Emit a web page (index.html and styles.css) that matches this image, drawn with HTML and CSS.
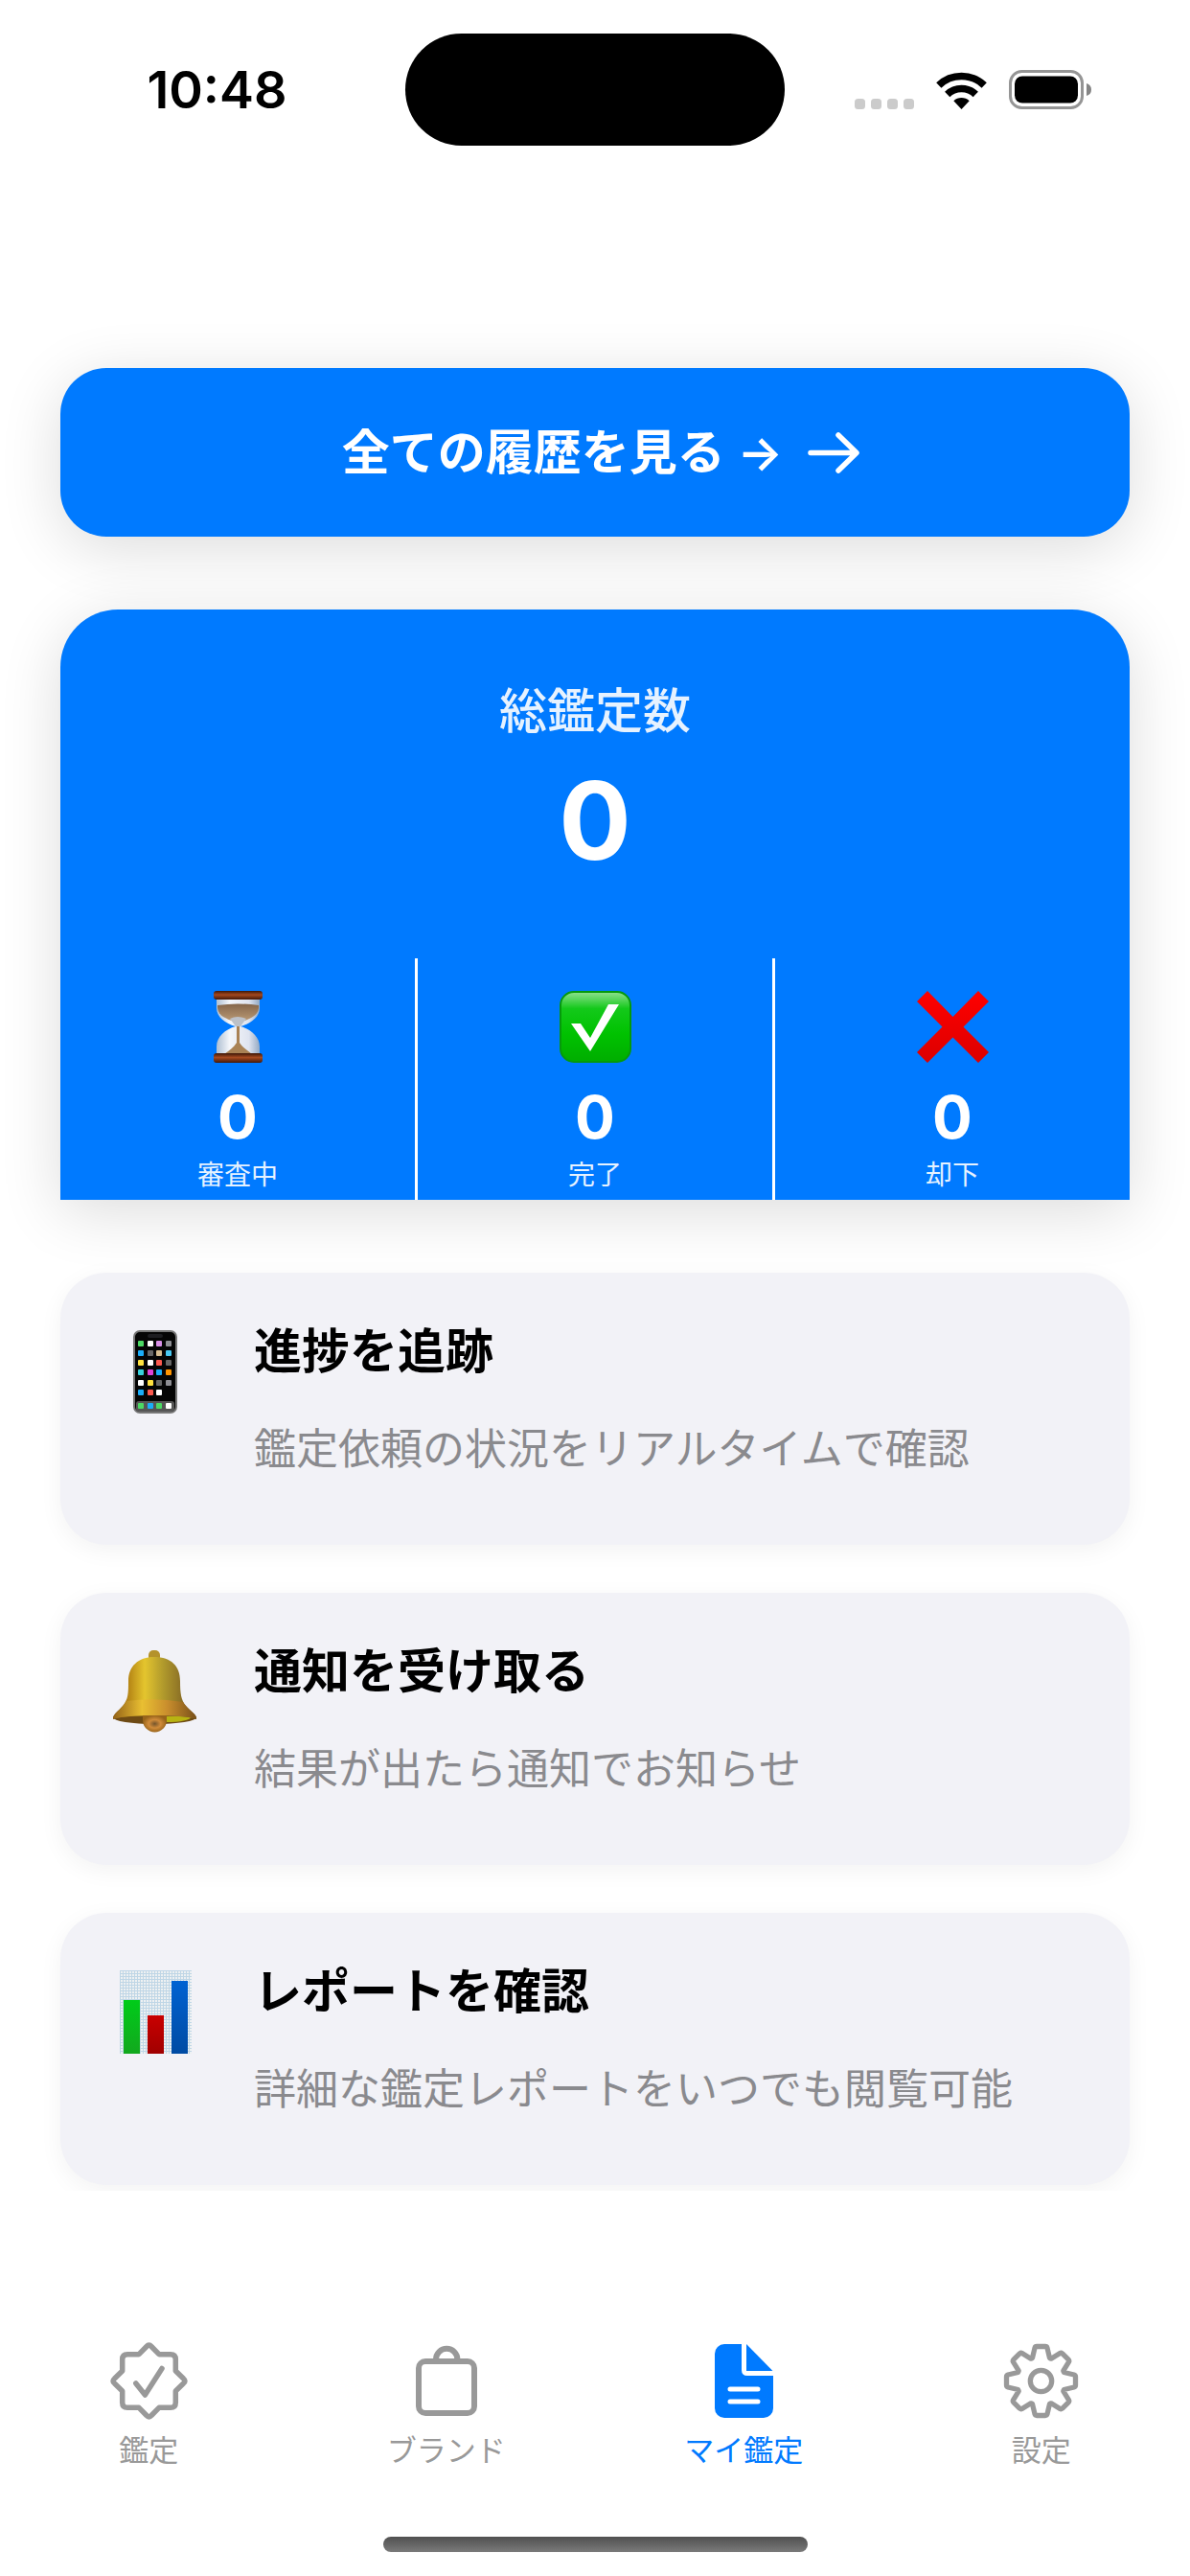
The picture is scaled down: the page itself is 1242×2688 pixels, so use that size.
FILE: index.html
```html
<!DOCTYPE html>
<html lang="ja">

<head>
  <meta charset="UTF-8">
  <meta name="viewport" content="width=device-width, initial-scale=1.0">
  <title>マイ鑑定</title>
  <link rel="stylesheet" href="styles.css">
</head>

<body>
  <header class="status-bar">
    <div class="status-left"><span class="time">10:48</span></div>
    <div class="island"></div>
    <div class="status-right">
      <svg class="signal" width="62" height="11" viewBox="0 0 62 11" fill="#cbcbcb">
        <rect width="11" height="11" rx="3.5" />
        <rect x="17" width="11" height="11" rx="3.5" />
        <rect x="34" width="11" height="11" rx="3.5" />
        <rect x="51" width="11" height="11" rx="3.5" />
      </svg>
      <svg width="53" height="39" viewBox="0 0 53 39">
        <g fill="none" stroke="#000" stroke-width="7.6">
          <path d="M2.8 13.9a34.5 34.5 0 0 1 47.4 0" />
          <path d="M11.7 23.4a21.5 21.5 0 0 1 29.6 0" />
        </g>
        <path d="M26.5 39l-8.2-8.7a12 12 0 0 1 16.4 0z" />
      </svg>
      <svg width="86" height="41" viewBox="0 0 86 41">
        <rect x="1.5" y="1.5" width="75" height="38" rx="12" fill="none" stroke="#959595" stroke-width="3" />
        <rect x="6" y="6.5" width="66" height="28" rx="8" />
        <path d="M81 14q5 1.500 5 6.500t-5 6.500z" fill="#858585" />
      </svg>
    </div>
  </header>

  <main class="content">
    <button class="history-button" type="button">
      <span>全ての履歴を見る →</span>
      <svg width="54" height="43" viewBox="0 0 54 43" fill="none" stroke="#fff" stroke-width="5.5" stroke-linecap="round" stroke-linejoin="round">
        <path d="M3 21.500H50M32 3l19 18.500L32 40" />
      </svg>
    </button>

    <section class="summary">
      <h1 class="summary-title">総鑑定数</h1>
      <p class="summary-total">0</p>
      <div class="stats">
        <div class="stat">
          <svg class="stat-icon" width="51" height="75" viewBox="0 0 51 75">
            <defs>
              <linearGradient id="wood" x2="0" y2="1">
                <stop offset="0" stop-color="#3d1708" />
                <stop offset=".45" stop-color="#a5491f" />
                <stop offset="1" stop-color="#42190a" />
              </linearGradient>
              <linearGradient id="glass">
                <stop offset="0" stop-color="#aebfd2" />
                <stop offset=".3" stop-color="#f4f6fa" />
                <stop offset=".75" stop-color="#dfe4f0" />
                <stop offset="1" stop-color="#93a9c4" />
              </linearGradient>
              <linearGradient id="sand" x2="0" y2="1">
                <stop offset="0" stop-color="#85664b" />
                <stop offset="1" stop-color="#bb9b76" />
              </linearGradient>
            </defs>
            <path d="M3 8h45v10c0 9-9 16-20 19 11 3 20 11 20 21v8H3v-8c0-10 9-18 20-21C12 34 3 27 3 18z" fill="url(#glass)" />
            <path d="M4 15q21-3 43 0v3c-1 8-9 11-17 14h-9C13 29 5 26 4 18z" fill="url(#sand)" />
            <path d="M17 29q8-4 17 0l-6 8h-5z" fill="#bdc1c8" />
            <path d="M24 37h3v17c3 5 8 8 13 12H11c5-4 10-7 13-12z" fill="#a98255" />
            <rect width="51" height="9" rx="3" fill="url(#wood)" />
            <rect y="65" width="51" height="10" rx="3" fill="url(#wood)" />
          </svg>
          <p class="stat-value">0</p>
          <p class="stat-label">審査中</p>
        </div>
        <div class="stat">
          <svg class="stat-icon" width="75" height="75" viewBox="0 0 75 75">
            <defs>
              <linearGradient id="green" x2="0" y2="1">
                <stop offset="0" stop-color="#8fe08f" />
                <stop offset=".24" stop-color="#13c91a" />
                <stop offset=".6" stop-color="#00c200" />
                <stop offset="1" stop-color="#00ad00" />
              </linearGradient>
            </defs>
            <rect x="1" y="1" width="73" height="73" rx="14" fill="url(#green)" stroke="#069a0b" stroke-width="2" />
            <path d="M12 34h10l10 15 19-35h11L32 63z" fill="#fff" />
          </svg>
          <p class="stat-value">0</p>
          <p class="stat-label">完了</p>
        </div>
        <div class="stat">
          <svg class="stat-icon" width="75" height="75" viewBox="0 0 75 75">
            <defs>
              <linearGradient id="red" x2="0" y2="1">
                <stop offset="0" stop-color="#ff0000" />
                <stop offset="1" stop-color="#dc0000" />
              </linearGradient>
            </defs>
            <path d="M11 0l26.500 27L64 0l11 11-26.500 26.500L75 64 64 75 37.500 48.500 11 75 0 64l26.500-26.500L0 11z" fill="url(#red)" />
          </svg>
          <p class="stat-value">0</p>
          <p class="stat-label">却下</p>
        </div>
      </div>
    </section>

    <section class="features">
      <article class="feature">
        <div class="feature-icon">
          <svg width="46" height="87" viewBox="0 0 46 87">
            <rect x="1" y="1" width="44" height="85" rx="6" fill="#050505" stroke="#777" stroke-width="2" />
            <rect x="15" y="4" width="16" height="4" rx="2" fill="#1d1d20" />
            <rect x="3" y="74" width="40" height="11" rx="3" fill="#555" />
            <!-- app grid, one group per row -->
            <g><rect x="5" y="11" width="6" height="6" rx="1" fill="#4cd964" /><rect x="15" y="11" width="6" height="6" rx="1" fill="#fff" /><rect x="24" y="11" width="6" height="6" rx="1" fill="#d990e8" /><rect x="34" y="11" width="6" height="6" rx="1" fill="#8e8e93" /></g>
            <g><rect x="5" y="21" width="6" height="6" rx="1" fill="#1badf8" /><rect x="15" y="21" width="6" height="6" rx="1" fill="#666" /><rect x="24" y="21" width="6" height="6" rx="1" fill="#d6bd91" /><rect x="34" y="21" width="6" height="6" rx="1" fill="#49c9f2" /></g>
            <g><rect x="5" y="31" width="6" height="6" rx="1" fill="#ffe13f" /><rect x="15" y="31" width="6" height="6" rx="1" fill="#fff" /><rect x="24" y="31" width="6" height="6" rx="1" fill="#fb594e" /><rect x="34" y="31" width="6" height="6" rx="1" fill="#666" /></g>
            <g><rect x="5" y="41" width="6" height="6" rx="1" fill="#38d1dc" /><rect x="15" y="41" width="6" height="6" rx="1" fill="#df43d8" /><rect x="24" y="41" width="6" height="6" rx="1" fill="#1badf8" /><rect x="34" y="41" width="6" height="6" rx="1" fill="#ff9500" /></g>
            <g><rect x="5" y="52" width="6" height="6" rx="1" fill="#fff" /><rect x="15" y="52" width="6" height="6" rx="1" fill="#ffe13f" /><rect x="24" y="52" width="6" height="6" rx="1" fill="#666" /><rect x="34" y="52" width="6" height="6" rx="1" fill="#8e8e93" /></g>
            <g><rect x="5" y="62" width="6" height="6" rx="1" fill="#1badf8" /><rect x="15" y="62" width="6" height="6" rx="1" fill="#fb594e" /><rect x="24" y="62" width="6" height="6" rx="1" fill="#fff" /></g>
            <g><rect x="5" y="76" width="6" height="6" rx="1" fill="#4cd964" /><rect x="15" y="76" width="6" height="6" rx="1" fill="#1badf8" /><rect x="24" y="76" width="6" height="6" rx="1" fill="#4cd964" /><rect x="34" y="76" width="6" height="6" rx="1" fill="#fff" /></g>
          </svg>
        </div>
        <div class="feature-text">
          <h2>進捗を追跡</h2>
          <p>鑑定依頼の状況をリアルタイムで確認</p>
        </div>
      </article>

      <article class="feature">
        <div class="feature-icon">
          <svg width="88" height="86" viewBox="0 0 88 86">
            <defs>
              <linearGradient id="gold">
                <stop offset="0" stop-color="#85591a" />
                <stop offset=".2" stop-color="#b98a17" />
                <stop offset=".38" stop-color="#e4c52e" />
                <stop offset=".6" stop-color="#b19a2c" />
                <stop offset=".8" stop-color="#8f7426" />
                <stop offset="1" stop-color="#694a18" />
              </linearGradient>
              <linearGradient id="rim">
                <stop offset="0" stop-color="#946217" />
                <stop offset=".35" stop-color="#e9bf32" />
                <stop offset=".65" stop-color="#c98e2d" />
                <stop offset="1" stop-color="#795019" />
              </linearGradient>
              <radialGradient id="clapper">
                <stop offset="0" stop-color="#75552c" />
                <stop offset=".5" stop-color="#d08b3a" />
                <stop offset="1" stop-color="#98641a" />
              </radialGradient>
            </defs>
            <rect x="37" width="12" height="12" rx="5" fill="#b4922b" />
            <ellipse cx="43.500" cy="70" rx="43.500" ry="7" fill="#6e4a14" />
            <path d="M55 69h28q-5 6-27 6z" fill="#b8b312" />
            <path d="M43 7c18 0 27 10 27 25 0 13 1 20 6 26 6 7 11 8 11 14-10-3-24-4-43.500-4S10 69 0 72c0-6 5-8 10-14 6-7 6-13 6-26C16 17 26 7 43 7z" fill="url(#gold)" />
            <path d="M14 53q29-4 59 1 4 6 9 10 5 4 5 8-10-4-43.500-4T0 72q0-4 5-8 5-4 9-11z" fill="url(#rim)" />
            <path d="M31 68h25v5a12.500 12.500 0 0 1-25 0z" fill="url(#clapper)" />
          </svg>
        </div>
        <div class="feature-text">
          <h2>通知を受け取る</h2>
          <p>結果が出たら通知でお知らせ</p>
        </div>
      </article>

      <article class="feature">
        <div class="feature-icon">
          <svg width="75" height="87" viewBox="0 0 75 87">
            <defs>
              <pattern id="grid" width="3" height="3" patternUnits="userSpaceOnUse">
                <rect width="3" height="3" fill="#eef1f2" />
                <path d="M0 .5h3M.5 0v3" stroke="#bfd6e6" />
              </pattern>
              <linearGradient id="bar-green" x2="0" y2="1">
                <stop offset="0" stop-color="#00cc1a" />
                <stop offset="1" stop-color="#12a81e" />
              </linearGradient>
              <linearGradient id="bar-red" x2="0" y2="1">
                <stop offset="0" stop-color="#c90000" />
                <stop offset="1" stop-color="#a00000" />
              </linearGradient>
              <linearGradient id="bar-blue" x2="0" y2="1">
                <stop offset="0" stop-color="#0062d2" />
                <stop offset="1" stop-color="#004ba3" />
              </linearGradient>
            </defs>
            <rect width="75" height="87" fill="url(#grid)" />
            <rect x="4" y="31" width="17" height="56" fill="url(#bar-green)" />
            <rect x="29" y="47" width="17" height="40" fill="url(#bar-red)" />
            <rect x="54" y="11" width="17" height="76" fill="url(#bar-blue)" />
          </svg>
        </div>
        <div class="feature-text">
          <h2>レポートを確認</h2>
          <p>詳細な鑑定レポートをいつでも閲覧可能</p>
        </div>
      </article>
    </section>
  </main>

  <footer class="bottom">
    <nav class="tab-bar">
      <a class="tab" href="#appraisal">
        <svg width="81" height="81" viewBox="0 0 81 81" fill="none" stroke="currentColor" stroke-width="5.5" stroke-linejoin="round" stroke-linecap="round">
          <path d="M30 12.700L38 4.500Q40.500 1.500 43 4.500L51 12.700H63Q68.300 12.700 68.300 18V30L76.500 38Q79.500 40.500 76.500 43L68.300 51V63Q68.300 68.300 63 68.300H51L43 76.500Q40.500 79.500 38 76.500L30 68.300H18Q12.700 68.300 12.700 63V51L4.500 43Q1.500 40.500 4.500 38L12.700 30V18Q12.700 12.700 18 12.700Z" />
          <path d="M26.800 43L36.400 55 54 27.500" />
        </svg>
        <span>鑑定</span>
      </a>
      <a class="tab" href="#brands">
        <svg width="64" height="81" viewBox="0 -4 64 81" fill="none" stroke="currentColor" stroke-width="6">
          <rect x="3" y="16" width="58" height="54" rx="7" />
          <path d="M21 15v-1a11.200 11.200 0 0 1 22.400 0v1" />
        </svg>
        <span>ブランド</span>
      </a>
      <a class="tab active" href="#mine" aria-current="page">
        <svg width="61" height="81" viewBox="0 -2 61 81" fill="currentColor">
          <path d="M10 0H28V27q0 6 6 6H61V67a10 10 0 0 1-10 10H10A10 10 0 0 1 0 67V10A10 10 0 0 1 10 0Z" />
          <path d="M33 0L60.500 28H33Z" />
          <path d="M16 47H45M16 60H45" stroke="#fff" stroke-width="5" stroke-linecap="round" />
        </svg>
        <span>マイ鑑定</span>
      </a>
      <a class="tab" href="#settings">
        <svg width="81" height="81" viewBox="-40.500 -40.500 81 81" fill="none" stroke="currentColor" stroke-width="5.3" stroke-linejoin="round">
          <path d="M-9-24L-6.500-34.500Q-6-36-4.500-36H4.500Q6-36 6.500-34.500L9-24 10.600-23.300 19.800-29Q21-29.700 22.300-28.600L28.600-22.300Q29.700-21 29-19.800L23.300-10.600 24-9 34.500-6.500Q36-6 36-4.500V4.500Q36 6 34.500 6.500L24 9 23.300 10.600 29 19.800Q29.700 21 28.600 22.300L22.300 28.600Q21 29.700 19.800 29L10.600 23.300 9 24 6.500 34.500Q6 36 4.500 36H-4.500Q-6 36-6.500 34.500L-9 24-10.600 23.300-19.800 29Q-21 29.700-22.300 28.600L-28.600 22.300Q-29.700 21-29 19.800L-23.300 10.600-24 9-34.500 6.500Q-36 6-36 4.500V-4.500Q-36-6-34.500-6.500L-24-9-23.300-10.600-29-19.800Q-29.700-21-28.600-22.300L-22.300-28.600Q-21-29.700-19.800-29L-10.600-23.300Z" />
          <circle r="11.200" />
        </svg>
        <span>設定</span>
      </a>
    </nav>
    <div class="home-indicator"></div>
  </footer>
</body>

</html>
```
FILE: styles.css
```css
* {
  box-sizing: border-box;
}

body {
  display: flex;
  flex-direction: column;
  min-height: 100vh;
  margin: 0;
  font-family: Inter, "Noto Sans CJK JP", sans-serif;
  color: #000;
  background-color: #fff;
}

h1,
h2,
p {
  margin: 0;
}

svg {
  display: block;
  flex-shrink: 0;
}

/* Status bar */
.status-bar {
  display: grid;
  grid-template-columns: 1fr 396px 1fr;
  align-items: center;
  padding-top: 35px;
}

.status-left {
  padding-left: 30px;
  text-align: center;
}

.time {
  font-size: 54px;
  line-height: 72px;
  font-weight: 600;
}

.island {
  height: 117px;
  border-radius: 60px;
  background-color: #000;
}

.status-right {
  display: flex;
  align-items: flex-end;
  justify-content: center;
  gap: 23px;
  padding-right: 30px;
}

/* Content */
.content {
  display: flex;
  flex-direction: column;
  gap: 76px;
  padding: 232px 63px 6px;
  overflow: hidden;
}

.history-button {
  display: flex;
  align-items: center;
  justify-content: center;
  gap: 26px;
  padding: 52px 42px 52px 54px;
  border: none;
  border-radius: 48px;
  font-family: inherit;
  font-size: 50px;
  line-height: 72px;
  font-weight: 600;
  color: #fff;
  background-color: #007aff;
  box-shadow: 0 12px 64px rgba(0, 0, 0, 0.14);
  cursor: pointer;
}

.summary {
  padding-top: 70px;
  border-radius: 60px 60px 0 0;
  text-align: center;
  color: #fff;
  background-color: #007aff;
  box-shadow: 0 12px 64px rgba(0, 0, 0, 0.14);
}

.summary-title {
  font-size: 50px;
  line-height: 72px;
  font-weight: 500;
  opacity: 0.9;
}

.summary-total {
  margin-top: 18px;
  font-size: 112px;
  line-height: 120px;
  font-weight: 700;
}

.stats {
  display: grid;
  grid-template-columns: repeat(3, 1fr);
  gap: 3px;
  margin-top: 84px;
}

.stat {
  display: flex;
  flex-direction: column;
  align-items: center;
  padding: 34px 0 6px;
}

.stat + .stat {
  box-shadow: -3px 0 0 #fff;
}

.stat-icon {
  margin-bottom: 21px;
}

.stat-value {
  font-size: 62px;
  line-height: 72px;
  font-weight: 700;
}

.stat-label {
  margin-top: 4px;
  font-size: 28px;
  line-height: 40px;
  opacity: 0.9;
}

/* Feature cards */
.features {
  display: flex;
  flex-direction: column;
  gap: 50px;
}

.feature {
  display: flex;
  gap: 54px;
  padding: 46px 50px 64px;
  border-radius: 48px;
  background-color: #f2f2f7;
  box-shadow: 0 6px 24px rgba(0, 0, 0, 0.05);
}

.feature-icon {
  display: flex;
  justify-content: center;
  width: 98px;
  padding-top: 14px;
}

.feature-text {
  display: flex;
  flex-direction: column;
  gap: 30px;
}

.feature-text h2 {
  font-size: 50px;
  line-height: 72px;
  font-weight: 600;
}

.feature-text p {
  font-size: 44px;
  line-height: 72px;
  color: #8a8a8e;
}

/* Tab bar */
.bottom {
  margin-top: auto;
  padding-bottom: 25px;
}

.tab-bar {
  display: grid;
  grid-template-columns: repeat(4, 1fr);
}

.tab {
  display: flex;
  flex-direction: column;
  align-items: center;
  gap: 12px;
  font-size: 31px;
  line-height: 40px;
  color: #999;
  text-decoration: none;
}

.tab.active {
  color: #007aff;
}

.home-indicator {
  width: 443px;
  height: 16px;
  margin: 70px auto 0;
  border-radius: 8px;
  background: linear-gradient(#505050, #7a7a7a);
}
```
